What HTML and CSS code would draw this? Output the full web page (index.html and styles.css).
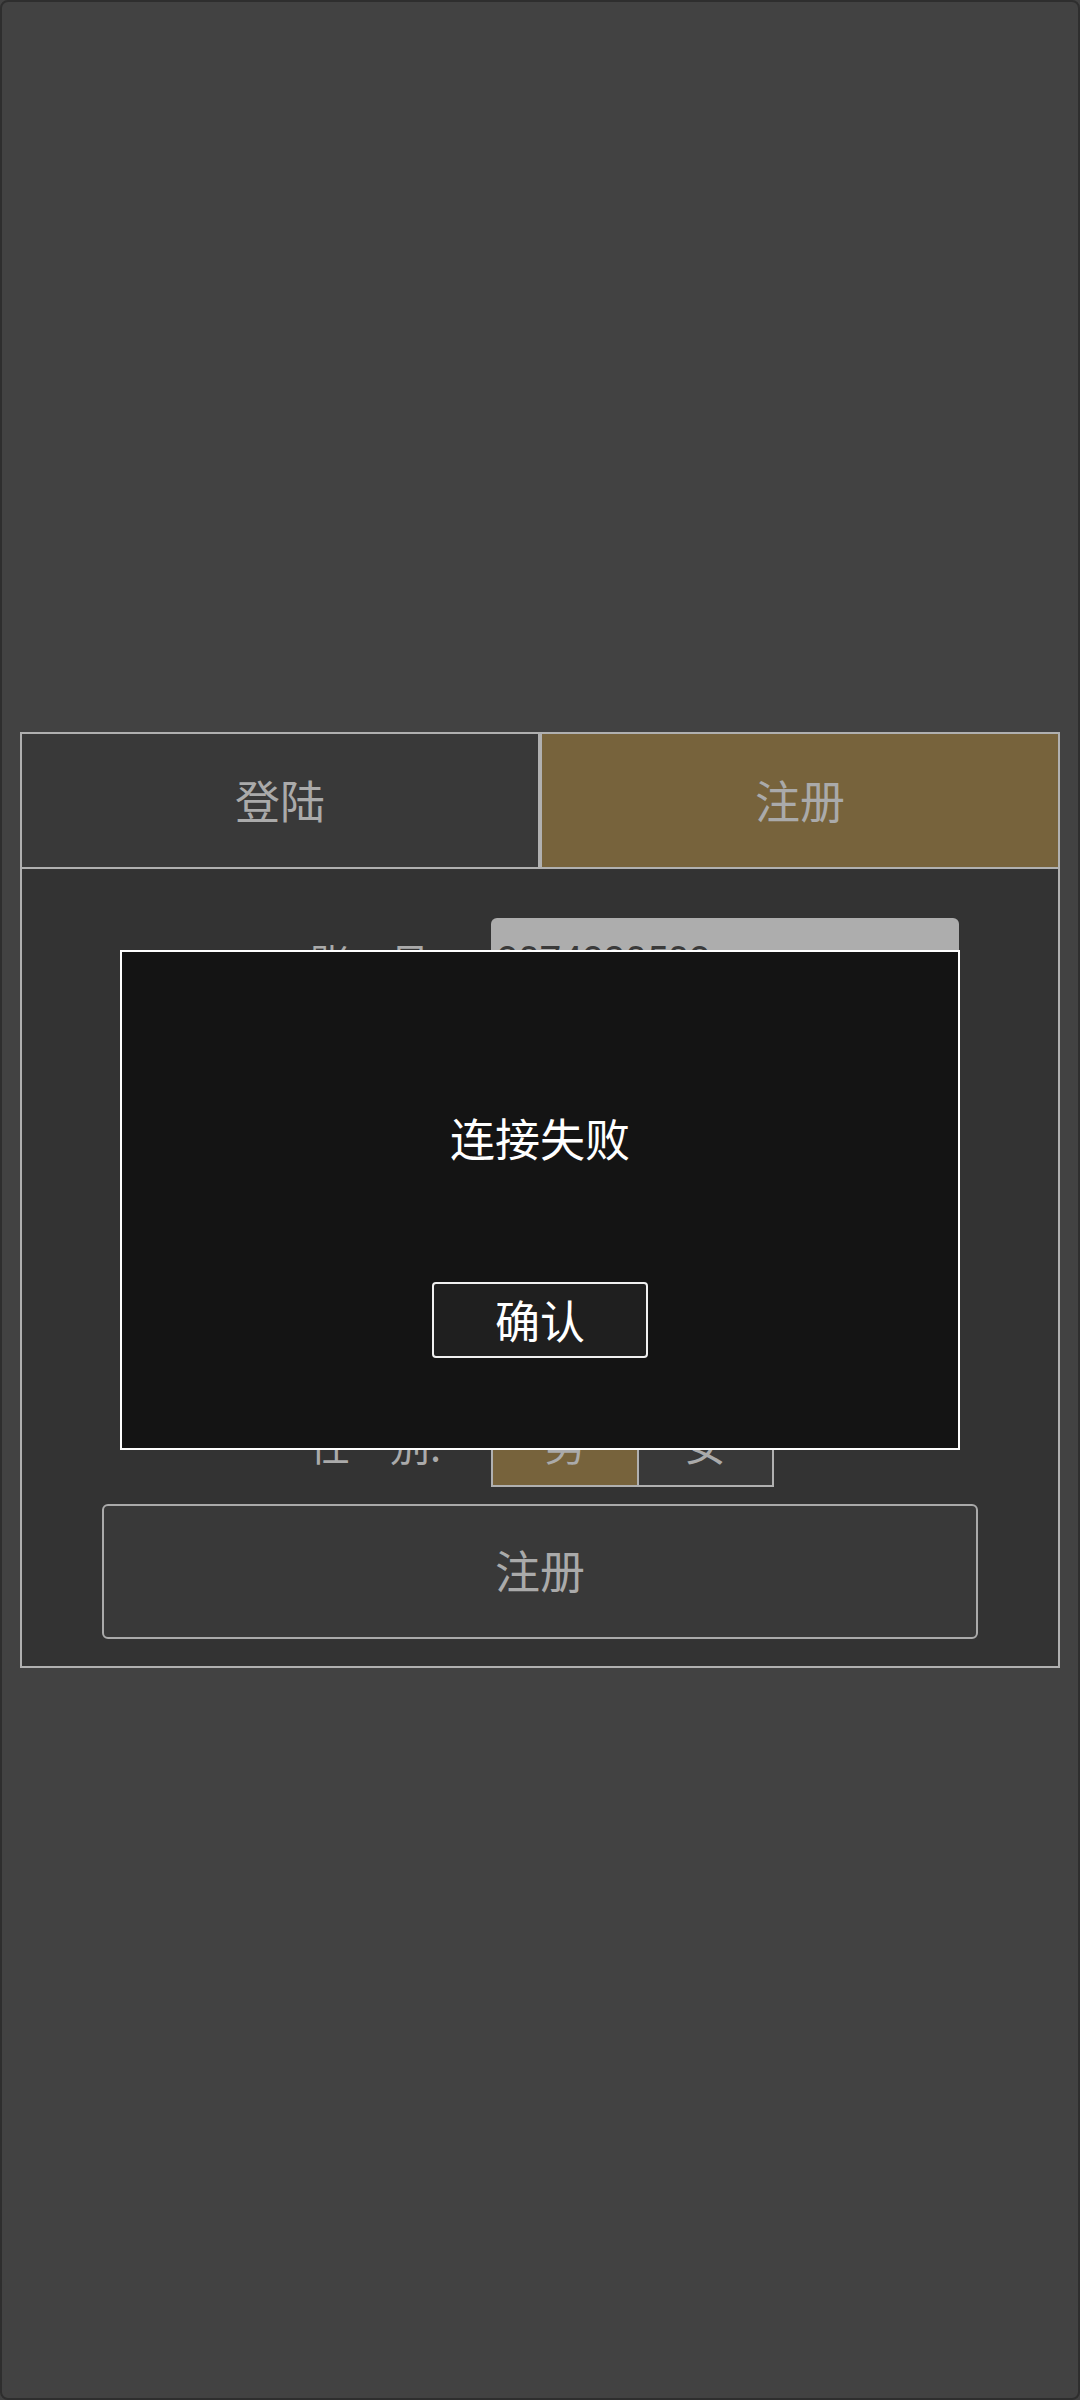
FILE: index.html
```html
<!DOCTYPE html>
<html lang="zh-CN">
<head>
<meta charset="utf-8">
<title>注册</title>
<link rel="stylesheet" href="styles.css">
</head>
<body>
<div class="screen">
  <div class="card">
    <div class="tabs">
      <div class="tab">登陆</div>
      <div class="tab active">注册</div>
    </div>
    <div class="panel">
      <div class="form">
        <div class="row">
          <span class="label">账　号:</span>
          <div class="input">3074320503</div>
        </div>
        <div class="row">
          <span class="label">密　码:</span>
          <div class="input"></div>
        </div>
        <div class="row">
          <span class="label">确认密码:</span>
          <div class="input"></div>
        </div>
        <div class="row">
          <span class="label">昵　称:</span>
          <div class="input"></div>
        </div>
        <div class="row">
          <span class="label">年　龄:</span>
          <div class="input"></div>
        </div>
        <div class="row">
          <span class="label">性　别:</span>
          <div class="seg">
            <div class="opt on">男</div>
            <div class="opt">女</div>
          </div>
        </div>
      </div>
      <div class="submit">注册</div>
    </div>
  </div>
  <div class="dialog">
    <div class="msg">连接失败</div>
    <div class="ok">确认</div>
  </div>
</div>
</body>
</html>
```

FILE: styles.css
```css
html, body {
  margin: 0;
  padding: 0;
  background: #424242;
}

.screen {
  position: relative;
  box-sizing: border-box;
  width: 1080px;
  height: 2400px;
  border: 2px solid #2e2e2e;
  border-radius: 8px;
  background: #424242;
  padding: 0 18px;
  display: flex;
  align-items: center;
  font-family: "Noto Sans CJK SC", "Noto Sans", sans-serif;
}

.card {
  width: 1040px;
  display: flex;
  flex-direction: column;
}

.tabs {
  display: flex;
  height: 137px;
}

.tab {
  flex: 1;
  box-sizing: border-box;
  border: 2px solid #b0b0b0;
  background: #393939;
  color: #aaaaaa;
  font-size: 45px;
  padding-bottom: 3px;
  display: flex;
  align-items: center;
  justify-content: center;
}

.tab.active {
  background: #77633c;
}

.panel {
  box-sizing: border-box;
  border: 2px solid #b0b0b0;
  border-top: none;
  background: #333333;
  padding: 49px 80px 27px;
  display: flex;
  flex-direction: column;
  gap: 17px;
}

.form {
  display: flex;
  flex-direction: column;
  gap: 10.6px;
  padding-left: 208px;
}

.row {
  display: grid;
  grid-template-columns: 181px 468px;
  height: 86px;
  align-items: center;
}

.label {
  color: #aaaaaa;
  font-size: 40px;
  line-height: 86px;
  white-space: nowrap;
}

.input {
  box-sizing: border-box;
  height: 86px;
  background: #adadad;
  border-radius: 6px;
  padding-left: 6px;
  color: #3a3a3a;
  font-family: Roboto, "Liberation Sans", sans-serif;
  font-size: 38px;
  line-height: 86px;
}

.seg {
  display: flex;
  height: 86px;
  box-sizing: border-box;
  border: 2px solid #b0b0b0;
  width: 283px;
}

.opt {
  display: flex;
  align-items: center;
  justify-content: center;
  color: #aaaaaa;
  font-size: 40px;
  background: #393939;
  flex: 133px 0 0;
}

.opt.on {
  background: #77633c;
  flex: 144px 0 0;
  border-right: 2px solid #b0b0b0;
}

.submit {
  box-sizing: border-box;
  height: 135px;
  border: 2px solid #aaaaaa;
  border-radius: 6px;
  background: #393939;
  color: #aaaaaa;
  font-size: 45px;
  padding-bottom: 3px;
  display: flex;
  align-items: center;
  justify-content: center;
}

.dialog {
  position: absolute;
  left: 50%;
  top: 50%;
  transform: translate(-50%, -50%);
  box-sizing: border-box;
  width: 840px;
  height: 500px;
  border: 2px solid #ffffff;
  background: #141414;
  display: flex;
  flex-direction: column;
  align-items: center;
  padding-top: 156px;
}

.msg {
  color: #ffffff;
  font-size: 45px;
  line-height: 60px;
}

.ok {
  margin-top: 114px;
  box-sizing: border-box;
  width: 216px;
  height: 76px;
  border: 2px solid #f0f0f0;
  border-radius: 4px;
  background: #1f1f1f;
  color: #ffffff;
  font-size: 45px;
  padding-bottom: 2px;
  display: flex;
  align-items: center;
  justify-content: center;
}
```
